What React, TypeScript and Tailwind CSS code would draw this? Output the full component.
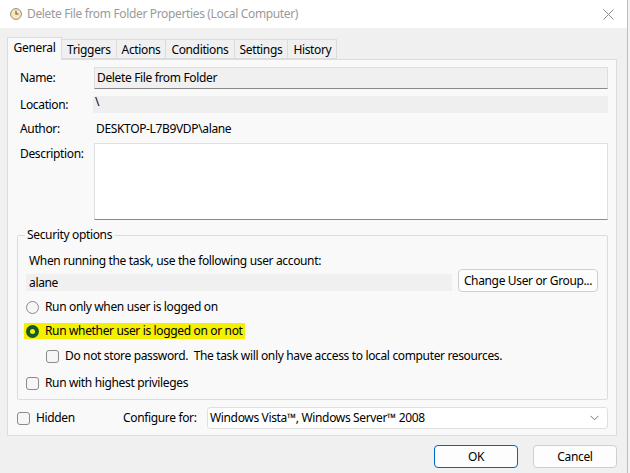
import React from "react";

const font = { fontFamily: '"Noto Sans", "Open Sans", sans-serif', letterSpacing: "-0.35px" };

function Radio({ checked }: { checked?: boolean }) {
  if (checked) {
    return (
      <span className="w-[13px] h-[13px] rounded-full bg-[#0f5a32] flex items-center justify-center shrink-0">
        <span className="w-[5px] h-[5px] rounded-full bg-[#f4f000]" />
      </span>
    );
  }
  return <span className="w-[13px] h-[13px] rounded-full border border-[#8a8a8a] bg-[#f6f6f6] shrink-0" />;
}

function Check() {
  return <span className="w-[13px] h-[13px] rounded-[3px] border border-[#8a8a8a] bg-[#f6f6f6] shrink-0" />;
}

export default function App() {
  const tabs = ["Triggers", "Actions", "Conditions", "Settings", "History"];
  return (
    <div style={font} className="w-[630px] h-[473px] flex bg-[#f0f0f0] text-[12px] text-black overflow-hidden">
      <div className="w-[628px] h-full flex flex-col border-r border-[#bdbdbd]">
        {/* title bar */}
        <div className="h-[28px] bg-white flex items-center shrink-0">
          <svg width="12" height="12" viewBox="0 0 12 12" className="ml-[10px] mr-[5px]">
            <circle cx="6" cy="6" r="5.4" fill="#fbe6b4" stroke="#8c8c8c" strokeWidth="1" />
            <path d="M6 2.8 V6 H8.5" stroke="#555" strokeWidth="1.1" fill="none" />
          </svg>
          <span className="text-[#9a9a9a] text-[12px]">Delete File from Folder Properties (Local Computer)</span>
          <div className="flex-1" />
          <svg width="11" height="11" viewBox="0 0 11 11" className="mr-[13px]">
            <path d="M0.5 0.5 L10.5 10.5 M10.5 0.5 L0.5 10.5" stroke="#8a8a8a" strokeWidth="1" />
          </svg>
        </div>
        <div className="flex-1 flex flex-col pl-[7px] pr-[10px] pt-[9px]">
          {/* tabs */}
          <div className="flex items-end h-[22px] relative z-10">
            <div className="h-[23px] px-[6px] bg-[#f9f9f9] border border-b-0 border-[#dcdcdc] flex items-center mb-[-1px] w-[55px] justify-center pb-[2px]">
              General
            </div>
            {tabs.map((t) => (
              <div key={t} className="h-[20px] px-[5px] border border-l-0 border-[#dcdcdc] bg-[#f0f0f0] flex items-center pt-[1px]">
                {t}
              </div>
            ))}
          </div>
          {/* panel */}
          <div className="h-[377px] bg-[#f9f9f9] border border-[#dcdcdc] flex flex-col pl-[12px] pr-[8px]">
            <div className="flex items-center h-[22px] mt-[7px]">
              <span className="w-[74px]">Name:</span>
              <div className="flex-1 h-[22px] bg-[#f0f0f0] border border-[#dedede] border-b-[#8a8a8a] flex items-center pl-[2px]">
                Delete File from Folder
              </div>
            </div>
            <div className="flex items-center h-[17px] mt-[7px]">
              <span className="w-[73px]">Location:</span>
              <div className="flex-1 h-[17px] bg-[#efefef] flex items-center pl-[2px] pb-[6px]">\</div>
            </div>
            <div className="flex items-center h-[17px] mt-[7px]">
              <span className="w-[76px]">Author:</span>
              <span>DESKTOP-L7B9VDP\alane</span>
            </div>
            <div className="flex mt-[6px] h-[77px]">
              <span className="w-[74px] pt-[2px]">Description:</span>
              <div className="flex-1 bg-white border border-[#e0e0e0] border-b-[#8a8a8a]" />
            </div>
            {/* group box */}
            <div className="relative mt-[15px] ml-[-3px] h-[165px] border border-[#dcdcdc] rounded-[2px] flex flex-col pl-[8px] pr-[9px]">
              <span className="absolute left-[7px] top-[-10px] bg-[#f9f9f9] px-[2px]">Security options</span>
              <div className="mt-[16px] ml-[3px] h-[17px] flex items-center">When running the task, use the following user account:</div>
              <div className="flex items-center mt-[0px] h-[23px]">
                <div className="w-[426px] h-[17px] bg-[#f0f0f0] flex items-center pl-[3px] mt-[4px]">alane</div>
                <div className="ml-[6px] w-[140px] h-[23px] border border-[#cfcfcf] rounded-[4px] bg-[#fdfdfd] flex items-center justify-center">
                  Change User or Group...
                </div>
              </div>
              <div className="flex items-center gap-[6px] mt-[7px] h-[16px]">
                <Radio />
                <span>Run only when user is logged on</span>
              </div>
              <div className="flex items-center mt-[8px] h-[16px]">
                <div className="flex items-center gap-[6px] bg-[#f4f000] ml-[-2px] pl-[2px] pr-[2px] h-[16px]">
                  <Radio checked />
                  <span>Run whether user is logged on or not</span>
                </div>
              </div>
              <div className="flex items-center gap-[6px] mt-[9px] h-[16px] ml-[20px]">
                <Check />
                <span className="whitespace-pre">Do not store password.  The task will only have access to local computer resources.</span>
              </div>
              <div className="flex items-center gap-[6px] mt-[11px] h-[16px]">
                <Check />
                <span>Run with highest privileges</span>
              </div>
            </div>
            <div className="flex items-center mt-[7px] h-[22px] ml-[-3px]">
              <Check />
              <span className="ml-[6px] w-[87px]">Hidden</span>
              <span className="w-[84px]">Configure for:</span>
              <div className="flex-1 h-[22px] bg-white border border-[#e0e0e0] rounded-[3px] flex items-center pl-[2px] pr-[8px]">
                <span className="flex-1">Windows Vista™, Windows Server™ 2008</span>
                <svg width="9" height="6" viewBox="0 0 9 6">
                  <path d="M0.5 0.8 L4.5 4.8 L8.5 0.8" stroke="#777" fill="none" strokeWidth="1" />
                </svg>
              </div>
            </div>
          </div>
          {/* buttons */}
          <div className="flex justify-end mt-[9px] gap-[15px]">
            <div className="w-[84px] h-[23px] border border-[#0067c0] rounded-[4px] bg-[#fdfdfd] flex items-center justify-center">OK</div>
            <div className="w-[84px] h-[23px] border border-[#cfcfcf] rounded-[4px] bg-[#fdfdfd] flex items-center justify-center">Cancel</div>
          </div>
        </div>
      </div>
      <div className="flex-1 bg-[#f3f3f3]" />
    </div>
  );
}
